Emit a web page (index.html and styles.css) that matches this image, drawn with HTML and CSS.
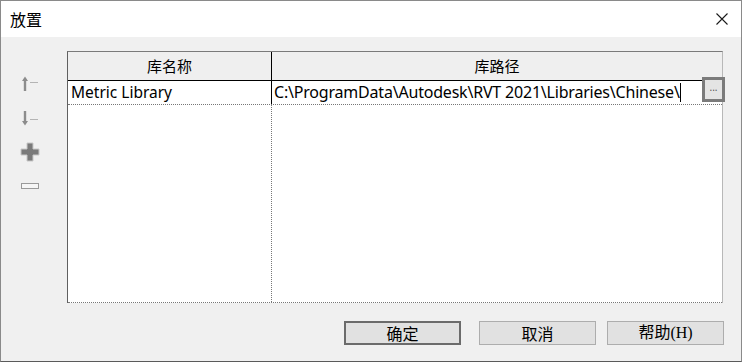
FILE: index.html
```html
<!DOCTYPE html>
<html lang="zh-CN">
    <head>
        <meta charset="UTF-8">
        <title>放置</title>
        <link rel="stylesheet" href="styles.css">
    </head>
    <body>
        <div class="dialog">
            <div class="titlebar">
                <span class="title">放置</span>
                <svg class="close" width="12" height="12" viewBox="0 0 12 12">
                    <path d="M0.5 0.5 L11.5 11.5 M11.5 0.5 L0.5 11.5" stroke="#1a1a1a" stroke-width="1.1" fill="none"/>
                </svg>
            </div>
            <div class="content">
                <div class="tools">
                    <div class="tool">
                        <svg width="20" height="18" viewBox="0 0 20 18">
                            <path d="M5 16 V4" stroke="#8c8c8c" stroke-width="2.4"/>
                            <path d="M2 6 L5 1.5 L8 6 Z" fill="#8c8c8c"/>
                            <path d="M10 7.5 H18" stroke="#b4b4b4" stroke-width="1"/>
                        </svg>
                    </div>
                    <div class="tool">
                        <svg width="20" height="18" viewBox="0 0 20 18">
                            <path d="M5 2 V14" stroke="#8c8c8c" stroke-width="2.4"/>
                            <path d="M2 12 L5 16.5 L8 12 Z" fill="#8c8c8c"/>
                            <path d="M10 10.5 H18" stroke="#b4b4b4" stroke-width="1"/>
                        </svg>
                    </div>
                    <div class="tool">
                        <svg width="20" height="20" viewBox="0 0 20 20">
                            <path d="M7 1 H13 V7 H19 V13 H13 V19 H7 V13 H1 V7 H7 Z" fill="#7a7a7a" stroke="#c8c8c8" stroke-width="1"/>
                        </svg>
                    </div>
                    <div class="tool">
                        <svg width="20" height="8" viewBox="0 0 20 8">
                            <rect x="1.5" y="1.5" width="17" height="5" fill="#f6f6f6" stroke="#9a9a9a" stroke-width="1"/>
                        </svg>
                    </div>
                </div>
                <div class="main">
                    <div class="grid">
                        <div class="head">
                            <div class="hcell name">库名称</div>
                            <div class="hcell">库路径</div>
                        </div>
                        <div class="row">
                            <div class="cell name">Metric Library</div>
                            <div class="cell edit">C:\ProgramData\Autodesk\RVT 2021\Libraries\Chinese\<span class="caret"></span></div>
                            <div class="browse"><span>...</span></div>
                        </div>
                        <div class="rest">
                            <div class="blank first"></div>
                            <div class="blank"></div>
                        </div>
                    </div>
                    <div class="buttons">
                        <button class="btn default">确定</button>
                        <button class="btn">取消</button>
                        <button class="btn help">帮助(H)</button>
                    </div>
                </div>
            </div>
        </div>
    </body>
</html>
```

FILE: styles.css
```css
body {
    margin: 0;
    font-family: "Noto Sans", "Noto Sans CJK SC", sans-serif;
    font-size: 15px;
    color: #000;
}
.dialog {
    width: 742px;
    height: 362px;
    box-sizing: border-box;
    border: 1px solid #8a8a8a;
    border-bottom-color: #5a5a5a;
    background: #f0f0f0;
    display: flex;
    flex-direction: column;
}
.titlebar {
    height: 36px;
    background: #fff;
    display: flex;
    align-items: center;
    justify-content: space-between;
    padding: 0 13px 0 9px;
}
.title {
    font-family: "Noto Sans CJK SC", sans-serif;
    font-size: 16px;
}
.content {
    flex: 1;
    display: flex;
}
.tools {
    width: 66px;
    padding-top: 30px;
    display: flex;
    flex-direction: column;
    align-items: flex-start;
    padding-left: 19px;
    box-sizing: border-box;
}
.tool {
    height: 34px;
    display: flex;
    align-items: center;
}
.main {
    flex: 1;
    padding-top: 14px;
}
.grid {
    width: 656px;
    height: 252px;
    box-sizing: border-box;
    border-left: 1px solid #606060;
    border-top: 1px solid #7a7a7a;
    border-right: 1px solid #b8b8b8;
    display: flex;
    flex-direction: column;
    position: relative;
}
.head {
    display: flex;
    height: 28px;
    background: #efefef;
    border-bottom: 1px solid #000;
}
.hcell {
    flex: 1;
    text-align: center;
    font-family: "Noto Sans CJK SC", sans-serif;
    font-size: 15px;
    line-height: 28px;
}
.name {
    width: 203px;
    flex: none;
    border-right: 1px solid #000;
}
.row {
    display: flex;
    height: 23px;
    background: #fff;
    border-bottom: 1px dotted #777;
}
.cell {
    line-height: 22px;
    padding-left: 3px;
    white-space: nowrap;
    overflow: hidden;
    font-size: 15.5px;
}
.row .name {
    width: 200px;
    border-right: 1px dotted #777;
}
.edit {
    width: 428px;
    padding-left: 2px;
    border-left: 1px solid #000;
    margin-left: -1px;
    font-size: 16px;
    letter-spacing: -0.2px;
}
.caret {
    display: inline-block;
    width: 1px;
    height: 19px;
    background: #000;
    vertical-align: -4px;
}
.browse {
    position: absolute;
    left: 634px;
    top: 25px;
    width: 17px;
    height: 19px;
    border: 3px solid #7b7b7b;
    background: #e4e4e4;
    display: flex;
    justify-content: center;
    font-size: 10px;
    line-height: 14px;
    color: #555;
}
.rest {
    flex: 1;
    display: flex;
    background: #fff;
    border-bottom: 1px dotted #777;
}
.blank {
    flex: 1;
}
.blank.first {
    width: 203px;
    flex: none;
    border-right: 1px dotted #777;
}
.buttons {
    display: flex;
    gap: 18px;
    padding: 18px 0 0 277px;
}
.btn {
    width: 117px;
    height: 24px;
    background: #e1e1e1;
    border: 1px solid #adadad;
    font-family: "Noto Sans CJK SC", sans-serif;
    font-size: 16px;
    padding: 0;
    line-height: 20px;
}
.btn.default {
    border: 2px solid #6b6b6b;
}
.btn.help {
    margin-left: -7px;
    font-family: "Liberation Serif", "Noto Sans CJK SC", serif;
}
```
